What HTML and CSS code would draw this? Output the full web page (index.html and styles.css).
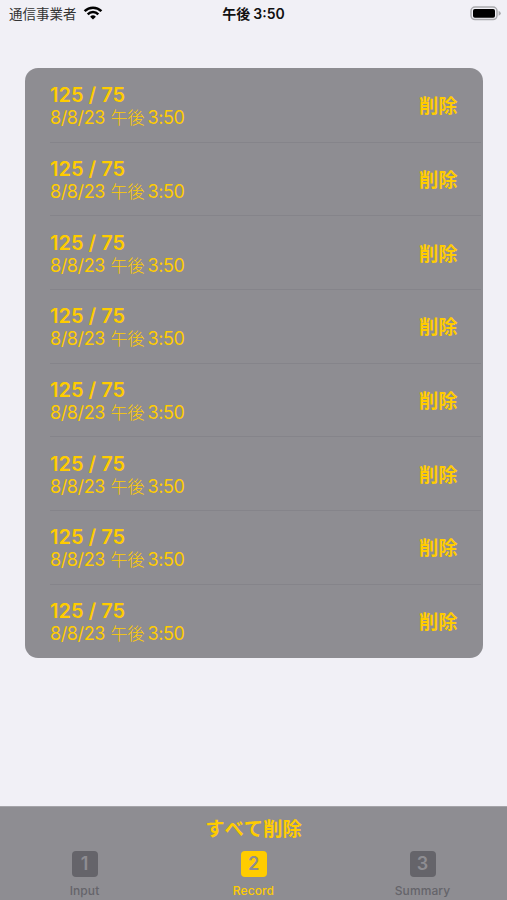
FILE: index.html
```html
<!DOCTYPE html>
<html lang="ja">

<head>
    <meta charset="UTF-8">
    <meta name="viewport" content="width=device-width, initial-scale=1.0">
    <title>Record</title>
    <link rel="stylesheet" href="styles.css">
</head>

<body>
    <div class="app">
        <header class="status-bar">
            <div class="carrier">
                <span>通信事業者</span>
                <svg class="wifi" viewBox="0 0 20 14" width="20" height="14">
                    <path d="M1.6 5.1a12 12 0 0 1 16.8 0" />
                    <path d="M4.7 8.3a7.5 7.5 0 0 1 10.6 0" />
                    <path class="wifi-dot" d="M10 13.6 7.1 10.7a4.1 4.1 0 0 1 5.8 0z" />
                </svg>
            </div>
            <div class="clock"><span>午後</span><span>3:50</span></div>
            <div class="battery">
                <svg viewBox="0 0 31 15" width="31" height="15">
                    <rect class="battery-case" x="1" y="1" width="26" height="12.6" rx="4" />
                    <rect x="3" y="3" width="22" height="8.8" rx="1.8" />
                    <path class="battery-tip" d="M28.6 4.8q2.2 1 2.2 2.5t-2.2 2.5z" />
                </svg>
            </div>
        </header>

        <main class="content">
            <ul class="record-list" id="recordList"></ul>
        </main>

        <footer class="bottom">
            <button class="delete-all">すべて削除</button>
            <nav class="tabs">
                <a class="tab">
                    <span class="tab-icon">1</span>
                    <span class="tab-label">Input</span>
                </a>
                <a class="tab active">
                    <span class="tab-icon">2</span>
                    <span class="tab-label">Record</span>
                </a>
                <a class="tab">
                    <span class="tab-icon">3</span>
                    <span class="tab-label">Summary</span>
                </a>
            </nav>
        </footer>
    </div>

    <script>
        const records = Array.from({ length: 8 }, () => ({
            high: 125, low: 75, date: '8/8/23', period: '午後', time: '3:50'
        }));

        document.getElementById('recordList').innerHTML = records.map(r => `
            <li class="record">
                <div class="record-info">
                    <div class="pressure">${r.high} / ${r.low}</div>
                    <div class="date"><span>${r.date}</span><span class="period">${r.period}</span><span>${r.time}</span></div>
                </div>
                <button class="delete">削除</button>
            </li>
        `).join('');
    </script>
</body>

</html>
```
FILE: styles.css
```css
* {
    margin: 0;
    padding: 0;
    box-sizing: border-box;
}

body {
    font-family: Inter, "Noto Sans CJK JP", sans-serif;
    background: #f1f0f6;
    color: #111;
}

button {
    border: none;
    background: none;
    font-family: inherit;
    color: #fc0;
    cursor: pointer;
}

.app {
    height: 900px;
    display: flex;
    flex-direction: column;
    overflow: hidden;
}

/* ステータスバー */
.status-bar {
    height: 28px;
    padding: 0 6px 0 9px;
    display: grid;
    grid-template-columns: 1fr auto 1fr;
    align-items: center;
    line-height: 28px;
}

.carrier {
    display: flex;
    align-items: center;
    gap: 6px;
    font-size: 13.5px;
    color: #333;
}

.wifi {
    margin-top: -2px;
    fill: none;
    stroke: #000;
    stroke-width: 2.5;
}

.wifi-dot {
    fill: #000;
    stroke: none;
}

.clock {
    display: flex;
    gap: 3px;
    margin-right: 3px;
    font-size: 14px;
    font-weight: 600;
}

.battery {
    display: flex;
    justify-content: flex-end;
    margin-top: -2px;
}

.battery-case {
    fill: #f1f0f6;
    stroke: #a9a9ad;
    stroke-width: 1.5;
}

.battery-tip {
    fill: #a9a9ad;
}

/* 記録リスト */
.content {
    flex: 1;
    padding: 40px 24.5px 0 25px;
}

.record-list {
    list-style: none;
    background: #8e8d92;
    border-radius: 13px;
    padding-left: 25px;
}

.record {
    height: 73.7px;
    margin-right: 2px;
    padding-right: 23px;
    display: flex;
    align-items: center;
    justify-content: space-between;
}

.record + .record {
    border-top: 1px solid #85848a;
}

.record-info {
    padding-top: 2px;
    color: #fc0;
}

.pressure {
    font-size: 20px;
    font-weight: 600;
    line-height: 24px;
}

.date {
    display: flex;
    font-size: 18px;
    letter-spacing: -0.4px;
    line-height: 22px;
}

.period {
    margin: 0 3px 0 5.5px;
    font-size: 17px;
    font-weight: 300;
    letter-spacing: 0;
}

.delete,
.delete-all {
    font-size: 19.3px;
    font-weight: 600;
}

/* 下部バー */
.bottom {
    height: 94.5px;
    background: #8e8d92;
    border-top: 1px solid #a5a4a9;
}

.delete-all {
    display: block;
    width: 100%;
    height: 44px;
    padding-top: 1px;
    font-kerning: none;
    line-height: 43px;
}

.tabs {
    display: flex;
}

.tab {
    flex: 1;
    display: flex;
    flex-direction: column;
    align-items: center;
    color: #65646a;
}

.tab-icon {
    width: 26px;
    height: 26px;
    border-radius: 4px;
    background: #65646a;
    color: #8e8d92;
    font-size: 18px;
    font-weight: 600;
    line-height: 26px;
    text-align: center;
}

.tab-label {
    margin-top: 6px;
    font-size: 12px;
    font-weight: 500;
    letter-spacing: 0.1px;
    line-height: 16px;
}

.tab.active {
    color: #fc0;
}

.tab.active .tab-icon {
    background: #fc0;
}
```
